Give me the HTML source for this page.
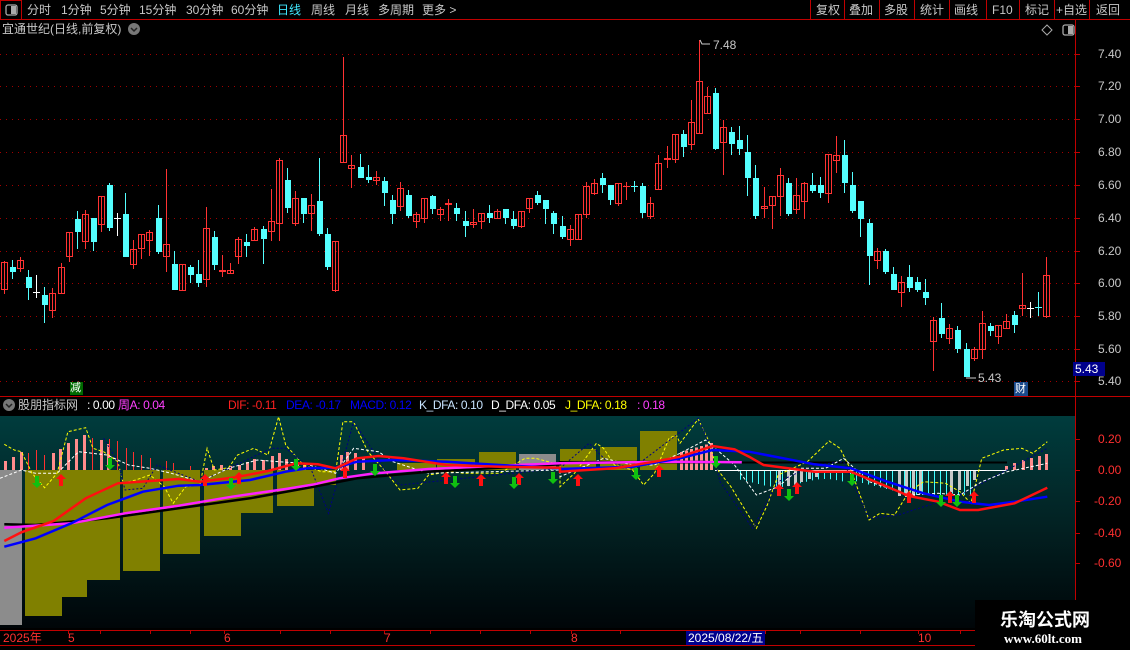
<!DOCTYPE html>
<html><head><meta charset="utf-8">
<style>
*{margin:0;padding:0;box-sizing:border-box}
body{width:1130px;height:650px;background:#000;overflow:hidden;position:relative;font-family:"Liberation Sans","Noto Sans CJK SC",sans-serif;font-size:12px;color:#c8c8c8}
.a{position:absolute;white-space:nowrap;line-height:14px}
.h{letter-spacing:-0.4px}
svg{position:absolute;left:0;top:0}
</style></head><body>
<svg id="s" width="1130" height="650" viewBox="0 0 1130 650">
<defs><linearGradient id="g" x1="0" y1="0" x2="0" y2="1"><stop offset="0" stop-color="#003c3d"/><stop offset="0.45" stop-color="#022526"/><stop offset="1" stop-color="#000508"/></linearGradient></defs>
<rect x="0" y="416" width="1075" height="212" fill="url(#g)"/>
<g id="grid"></g><g id="ind"></g><g id="cand"></g>
<line x1="0" y1="19.5" x2="1130" y2="19.5" stroke="#c00000"/>
<rect x="0.5" y="0.5" width="21" height="19" fill="none" stroke="#c00000"/>
<line x1="0" y1="396.5" x2="1130" y2="396.5" stroke="#c00000"/>
<line x1="1075.5" y1="20" x2="1075.5" y2="630" stroke="#c00000"/>
<line x1="0" y1="630.5" x2="975" y2="630.5" stroke="#c00000"/>
<line x1="0" y1="645.5" x2="975" y2="645.5" stroke="#c00000"/>
<rect x="6" y="5" width="11" height="10" rx="2" fill="none" stroke="#aaa" stroke-width="1.3"/><rect x="11" y="6" width="5" height="8" fill="#aaa"/>
<rect x="1063" y="25" width="11" height="10" rx="2" fill="none" stroke="#aaa" stroke-width="1.3"/><rect x="1068" y="26" width="5" height="8" fill="#aaa"/>
<path d="M1047 25 L1052 30 L1047 35 L1042 30 Z" fill="none" stroke="#aaa"/>
<circle cx="134" cy="29" r="6" fill="#777"/><path d="M131 28 L134 31 L137 28" fill="none" stroke="#222" stroke-width="1.5"/>
<circle cx="9" cy="405" r="6" fill="#777"/><path d="M6 404 L9 407 L12 404" fill="none" stroke="#222" stroke-width="1.5"/>
<g stroke="#c00000"><line x1="810.5" y1="0" x2="810.5" y2="19"/><line x1="844.5" y1="0" x2="844.5" y2="19"/><line x1="879.5" y1="0" x2="879.5" y2="19"/><line x1="914.5" y1="0" x2="914.5" y2="19"/><line x1="949.5" y1="0" x2="949.5" y2="19"/><line x1="986.5" y1="0" x2="986.5" y2="19"/><line x1="1019.5" y1="0" x2="1019.5" y2="19"/><line x1="1054.5" y1="0" x2="1054.5" y2="19"/><line x1="1089.5" y1="0" x2="1089.5" y2="19"/></g>
<g id="ticks" stroke="#c00000"></g>
<polyline points="700,40 702,44 710,44" fill="none" stroke="#ccc"/>
<polyline points="966,378 976,378" fill="none" stroke="#ccc"/>
<rect x="686" y="631" width="79" height="14" fill="#00008c"/>
<rect x="1073" y="362" width="32" height="14" fill="#00008c"/>
<rect x="70" y="382" width="13" height="13" fill="#006a00"/>
<rect x="1014" y="382" width="14" height="14" fill="#1a4a8c"/>
</svg>
<div class="a" style="left:27px;top:3px">分时</div>
<div class="a" style="left:61px;top:3px">1分钟</div>
<div class="a" style="left:100px;top:3px">5分钟</div>
<div class="a" style="left:139px;top:3px">15分钟</div>
<div class="a" style="left:186px;top:3px">30分钟</div>
<div class="a" style="left:231px;top:3px">60分钟</div>
<div class="a" style="left:277px;top:3px;color:#40e8ff">日线</div>
<div class="a" style="left:311px;top:3px">周线</div>
<div class="a" style="left:345px;top:3px">月线</div>
<div class="a" style="left:378px;top:3px">多周期</div>
<div class="a" style="left:422px;top:3px">更多 &gt;</div>
<div class="a" style="left:816px;top:3px">复权</div>
<div class="a" style="left:849px;top:3px">叠加</div>
<div class="a" style="left:884px;top:3px">多股</div>
<div class="a" style="left:920px;top:3px">统计</div>
<div class="a" style="left:954px;top:3px">画线</div>
<div class="a" style="left:992px;top:3px">F10</div>
<div class="a" style="left:1025px;top:3px">标记</div>
<div class="a" style="left:1056px;top:3px">+自选</div>
<div class="a" style="left:1096px;top:3px">返回</div>
<div class="a" style="left:2px;top:22px">宜通世纪(日线,前复权)</div>
<div class="a" style="left:713px;top:38px">7.48</div>
<div class="a" style="left:978px;top:371px">5.43</div>
<div class="a" style="left:1075px;top:362px;color:#fff">5.43</div>
<div class="a" style="left:70px;top:381px;color:#fff;font-size:11px">减</div>
<div class="a" style="left:1015px;top:382px;color:#fff;font-size:11px">财</div>
<div id="pl"></div>
<div class="a" style="left:18px;top:398px">股朋指标网</div>
<div class="a h" style="left:87px;top:398px;color:#fff">: 0.00</div>
<div class="a h" style="left:118px;top:398px;color:#ff40ff">周A: 0.04</div>
<div class="a h" style="left:228px;top:398px;color:#ff2020">DIF: -0.11</div>
<div class="a h" style="left:286px;top:398px;color:#0000ff">DEA: -0.17</div>
<div class="a h" style="left:350px;top:398px;color:#0000ff">MACD: 0.12</div>
<div class="a h" style="left:419px;top:398px;color:#c8e4ff">K_DFA: 0.10</div>
<div class="a h" style="left:491px;top:398px;color:#fff">D_DFA: 0.05</div>
<div class="a h" style="left:565px;top:398px;color:#ffff00">J_DFA: 0.18</div>
<div class="a h" style="left:637px;top:398px;color:#ff40ff">: 0.18</div>
<div class="a" style="left:1098px;top:432px;color:#ff3030">0.20</div>
<div class="a" style="left:1098px;top:463px;color:#ff3030">0.00</div>
<div class="a" style="left:1094px;top:494px;color:#ff3030">-0.20</div>
<div class="a" style="left:1094px;top:526px;color:#ff3030">-0.40</div>
<div class="a" style="left:1094px;top:556px;color:#ff3030">-0.60</div>
<div class="a" style="left:3px;top:631px;color:#ff3030">2025年</div>
<div class="a" style="left:68px;top:631px;color:#ff3030">5</div>
<div class="a" style="left:224px;top:631px;color:#ff3030">6</div>
<div class="a" style="left:384px;top:631px;color:#ff3030">7</div>
<div class="a" style="left:571px;top:631px;color:#ff3030">8</div>
<div class="a" style="left:688px;top:631px;color:#fff">2025/08/22/五</div>
<div class="a" style="left:918px;top:631px;color:#ff3030">10</div>
<div style="position:absolute;left:975px;top:600px;width:155px;height:50px;background:#000"></div>
<div class="a" style="left:1000px;top:608px;color:#fff;font-size:18px;font-weight:bold;line-height:22px;font-family:'Noto Sans CJK SC',sans-serif">乐淘公式网</div>
<div class="a" style="left:1004px;top:632px;color:#fff;font-size:13px;font-weight:bold;font-family:'Liberation Serif',serif">www.60lt.com</div>
<script>
var NS="http://www.w3.org/2000/svg";
function el(p,t,a){var e=document.createElementNS(NS,t);for(var k in a)e.setAttribute(k,a[k]);p.appendChild(e);return e;}
var grid=document.getElementById('grid'),cand=document.getElementById('cand'),ind=document.getElementById('ind'),tk=document.getElementById('ticks');
var labs=[[7.40,54],[7.20,86],[7.00,119],[6.80,152],[6.60,185],[6.40,218],[6.20,251],[6.00,283],[5.80,316],[5.60,349],[5.40,381]];
var pl=document.getElementById('pl'),h='';
labs.forEach(function(l){el(grid,'line',{x1:0,y1:l[1]+.5,x2:1075,y2:l[1]+.5,stroke:'#a00000','stroke-dasharray':'1 5'});
el(tk,'line',{x1:1075,y1:l[1]+.5,x2:1080,y2:l[1]+.5});
h+='<div class="a" style="left:1098px;top:'+(l[1]-7)+'px">'+l[0].toFixed(2)+'</div>';});
pl.innerHTML=h;
[439,470,501,533,563].forEach(function(y){el(tk,'line',{x1:1075,y1:y+.5,x2:1080,y2:y+.5});});
var C=[['u',262,290,261,294],['d',267,272,260,279],['u',260,269,257,272],['d',277,288,270,300],['w',292,292,275,298],['d',295,305,287,323],['u',293,311,288,318],['u',267,294,263,294],['u',232,257,232,262],['d',219,232,211,249],
['u',214,242,210,249],['d',218,242,218,251],['u',196,225,196,232],['d',185,228,183,231],['w',218,218,213,236],['d',214,257,193,257],['u',249,265,240,269],['u',234,249,234,259],['u',232,241,230,256],['d',218,252,205,254],
['u',244,257,169,272],['d',264,290,251,290],['u',264,291,264,291],['d',267,275,265,283],['d',274,283,260,287],['u',228,280,207,287],['d',237,265,231,270],['u',270,272,255,277],['u',270,274,263,274],['u',239,257,237,264],
['d',242,246,234,257],['u',229,241,227,241],['d',229,239,226,264],['u',221,232,189,241],['u',160,224,158,241],['d',180,208,168,213],['u',198,224,191,226],['d',198,214,198,223],['u',205,214,194,231],['d',201,234,158,236],
['d',234,267,228,270],['u',241,291,241,292],['u',135,163,57,163],['u',165,169,155,188],['d',167,178,154,178],['d',177,180,165,183],['u',177,181,171,185],['d',181,193,177,206],['d',200,214,195,224],['u',188,207,182,211],
['d',195,216,190,218],['u',214,222,212,228],['u',198,219,198,223],['d',196,209,195,214],['u',209,215,207,221],['u',203,205,199,221],['d',208,214,203,221],['d',221,226,211,237],['u',222,225,209,228],['u',213,222,213,229],
['d',213,218,205,223],['u',211,219,209,219],['d',209,218,209,224],['d',219,226,211,229],['u',211,227,211,228],['u',198,209,198,213],['d',195,203,191,205],['d',200,209,200,224],['d',213,224,211,234],['d',226,237,216,239],
['u',229,240,225,246],['u',214,240,214,240],['u',186,215,182,218],['u',183,194,179,195],['d',178,185,173,193],['d',185,200,185,205],['u',183,204,183,206],['u',186,186,182,200],['d',186,186,181,192],['d',186,213,183,218],
['u',203,217,197,219],['u',163,190,155,190],['u',158,160,146,168],['u',134,160,134,163],['d',134,147,130,157],['u',122,145,100,150],['u',81,134,40,134],['u',96,114,87,114],['d',93,149,88,150],['u',127,143,120,175],
['d',132,144,127,155],['d',140,149,126,155],['d',152,178,135,196],['d',178,216,165,219],['u',206,209,187,218],['u',196,206,196,229],['u',175,197,168,216],['d',183,214,178,216],['u',195,210,178,214],['u',183,202,182,219],
['d',185,191,173,193],['d',185,193,177,198],['u',154,194,154,203],['u',155,161,136,173],['d',155,183,140,193],['d',185,211,172,213],['d',201,219,201,237],['d',223,256,219,285],['u',251,261,248,269],['d',251,272,249,274],
['d',274,290,267,290],['u',282,293,276,307],['d',277,288,265,292],['d',282,290,277,292],['d',292,298,279,305],['u',320,342,317,371],['d',318,334,303,338],['u',328,339,324,344],['d',330,349,326,353],['d',349,377,343,377],
['u',349,359,347,361],['u',323,350,311,359],['d',326,331,323,336],['u',325,337,325,344],['u',321,329,314,329],['d',315,325,311,333],['u',305,309,273,316],['w',308,308,302,318],['c',307,307,292,316],['u',275,317,257,318]];
C.forEach(function(c,i){var x=Math.round(4+8.08*i);var col=c[0]=='u'?'#ff3232':c[0]=='w'?'#ffffff':'#54ffff';
el(cand,'line',{x1:x+.5,y1:c[3],x2:x+.5,y2:c[4],stroke:col});
if(c[2]-c[1]<2){el(cand,'line',{x1:x-3,y1:c[1]+.5,x2:x+4,y2:c[1]+.5,stroke:col});}
else if(c[0]=='u'){el(cand,'rect',{x:x-2.5,y:c[1]+.5,width:6,height:c[2]-c[1]-1,fill:'none',stroke:col});}
else el(cand,'rect',{x:x-2,y:c[1],width:6,height:c[2]-c[1],fill:col});});
function R(x1,x2,y1,y2,f){el(ind,'rect',{x:x1,y:Math.min(y1,y2),width:x2-x1,height:Math.abs(y2-y1),fill:f});}
var OL='#808000';
R(0,22,470,625,'#8c8c8c');
[[25,62,616],[62,87,597],[87,120,580],[123,160,571],[163,200,554],[204,241,536],[241,273,513],[277,314,506],[314,336,485]].forEach(function(b){R(b[0],b[1],470,b[2],OL);});
[[397,436,463],[437,475,459],[479,516,452],[560,596,449],[600,637,447],[640,677,431]].forEach(function(b){R(b[0],b[1],b[2],470,OL);});
R(519,556,454,470,'#8c8c8c');
var pk=[[4,461],[12,457],[20,452],[52,453],[59,449],[67,443],[75,439],[83,435],[100,440],[107,444],[205,468],[212,466],[220,465],[229,466],[238,465],[246,462],[253,459],[262,460],[271,456],[278,453],[285,459],[296,462],[303,465],[340,455],[346,452],[354,453],[362,458]];
pk.forEach(function(p){R(p[0],p[0]+3,p[1],470,'#ff8c8c');});
[[28,453],[36,450],[44,455],[92,438],[109,439],[117,441],[126,448],[133,452],[141,455],[150,458],[166,461],[173,463],[182,470],[190,466]].forEach(function(p){R(p[0],p[0]+1,p[1],470,'#ff3030');});
for(var x=680;x<=713;x+=5)R(x,x+3,452-(x-680)*0.3,470,'#ff9090');
for(x=740;x<=845;x+=6)el(ind,'line',{x1:x+.5,y1:470,x2:x+.5,y2:483+Math.sin(x/15)*4,stroke:'#40ffff'});
[[778,488],[787,486],[794,484],[800,482],[808,479],[815,477]].forEach(function(p){R(p[0],p[0]+3,470,p[1],'#c8c8c8');});
for(x=850;x<=975;x+=6)el(ind,'line',{x1:x+.5,y1:470,x2:x+.5,y2:480+Math.min(x-850,60)*0.25,stroke:'#40ffff'});
[[898,496],[905,497],[912,496],[919,494],[950,492],[958,490],[966,486],[973,480]].forEach(function(p){R(p[0],p[0]+3,470,p[1],'#c8c8c8');});
[[1005,466],[1013,463],[1022,460],[1030,458],[1038,456],[1045,454]].forEach(function(p){R(p[0],p[0]+3,p[1],470,'#ff8c8c');});
el(ind,'line',{x1:715,y1:470.5,x2:1007,y2:470.5,stroke:'#fff'});
el(ind,'line',{x1:560,y1:462.5,x2:1007,y2:462.5,stroke:'#000','stroke-width':2});
function P(a,b){var s=[];a.forEach(function(p){s.push((p[0]/2.8).toFixed(1)+','+(415+p[1]/3).toFixed(1));});(b||[]).forEach(function(p){s.push((560+p[0]/2.75).toFixed(1)+','+(415+p[1]/3).toFixed(1));});return s.join(' ');}
function L(pts,col,w,d){var a={points:pts,fill:'none',stroke:col,'stroke-width':w};if(d)a['stroke-dasharray']=d;el(ind,'polyline',a);}
L(P([[12,88],[40,105],[60,110],[90,175],[125,218],[160,175],[190,50],[240,38],[260,100],[290,110],[330,140],[345,205],[380,195],[420,180],[460,215],[485,265],[520,215],[560,210],[580,100],[600,165],[640,158],[665,120],[710,100],[750,120],[780,5],[800,90],[850,150],[900,170],[940,170],[960,20],[990,20],[1030,110],[1080,170],[1120,225],[1170,220],[1200,180],[1260,170],[1300,175],[1400,175],[1470,130],[1500,130],[1568,150]],[[0,215],[40,175],[100,85],[120,100],[150,150],[200,165],[230,210],[260,175],[300,70],[320,60],[330,85],[380,12],[410,80],[430,160],[470,215],[540,340],[570,270],[600,180],[640,160],[680,140],[740,78],[770,100],[800,165],[850,315],[880,295],[920,300],[960,230],[1000,200],[1060,205],[1100,230],[1130,265],[1160,130],[1220,105],[1270,100],[1300,115],[1340,80]]),'#ffff00',1,'3 2');
L(P([[290,70],[330,140],[350,225],[400,220],[440,150],[560,200],[760,100],[800,100],[870,160],[920,295],[990,20],[1040,100],[1080,170],[1120,210],[1568,160]],[[80,85],[130,140],[200,160],[380,10],[420,110],[440,200],[530,340],[600,200],[700,150],[780,140],[850,310],[930,300],[1100,240],[1340,100]]),'#000080',1,'2 2');
L(P([[0,190],[60,165],[100,175],[160,175],[220,110],[300,120],[360,150],[420,160],[480,175],[560,200],[640,160],[720,135],[780,140],[850,145],[940,175],[990,100],[1060,110],[1100,140],[1200,175],[1568,165]],[[0,185],[120,130],[200,150],[260,150],[330,115],[400,75],[480,150],[540,240],[600,215],[660,160],[730,160],[780,130],[850,200],[960,240],[1040,235],[1100,240],[1160,200],[1230,170],[1340,145]]),'#ffffff',1,'3 2');
L(P([[12,328],[100,330],[300,310],[500,280],[700,250],[880,215],[1000,190],[1200,170],[1568,148]],[[0,142],[400,140]]),'#000',2.5);
L(P([[12,338],[200,325],[350,295],[500,272],[650,245],[800,222],[880,208],[950,190],[1050,175],[1200,162],[1400,152],[1568,145]],[[0,145],[300,140],[500,142]]),'#ff20ff',2.5);
L(P([[12,395],[100,370],[200,325],[300,270],[400,230],[500,212],[560,210],[700,195],[800,170],[860,160],[940,158],[1000,140],[1100,135],[1250,140],[1400,150],[1568,160]],[[0,162],[200,155],[330,130],[420,105],[520,110],[700,148],[800,160],[900,200],[1000,235],[1100,260],[1180,270],[1250,260],[1340,245]]),'#0000ff',2.5);
L(P([[12,378],[60,352],[150,318],[240,250],[330,205],[420,198],[500,192],[560,200],[660,187],[750,168],[830,145],[890,148],[940,160],[1000,130],[1060,123],[1130,130],[1250,150],[1400,155],[1568,158]],[[0,170],[150,160],[260,140],[330,125],[420,93],[480,103],[520,125],[560,150],[700,170],[800,170],[900,215],[960,243],[1040,260],[1100,285],[1150,285],[1250,265],[1340,218]]),'#ff1010',2.5);
function up(x,y){el(ind,'path',{d:'M'+x+' '+(y-8)+' L'+(x+5)+' '+(y-3)+' L'+(x+2)+' '+(y-3)+' L'+(x+2)+' '+(y+4)+' L'+(x-2)+' '+(y+4)+' L'+(x-2)+' '+(y-3)+' L'+(x-5)+' '+(y-3)+'Z',fill:'#ff1010'});}
function dn(x,y){el(ind,'path',{d:'M'+x+' '+(y+8)+' L'+(x+5)+' '+(y+3)+' L'+(x+2)+' '+(y+3)+' L'+(x+2)+' '+(y-4)+' L'+(x-2)+' '+(y-4)+' L'+(x-2)+' '+(y+3)+' L'+(x-5)+' '+(y+3)+'Z',fill:'#10c010'});}
[[61,482],[205,482],[239,480],[345,474],[446,480],[481,482],[519,481],[578,482],[659,473],[779,492],[797,490],[909,499],[950,499],[974,499]].forEach(function(p){up(p[0],p[1]);});
[[37,480],[110,462],[231,482],[296,463],[375,468],[455,480],[514,481],[553,476],[636,472],[716,460],[789,493],[852,478],[941,499],[957,499]].forEach(function(p){dn(p[0],p[1]);});
[68,100,150,190,224,280,330,384,430,480,530,571,620,686,765,800,860,918,960].forEach(function(x){el(tk,'line',{x1:x+.5,y1:630,x2:x+.5,y2:634});});
</script>
</body></html>
